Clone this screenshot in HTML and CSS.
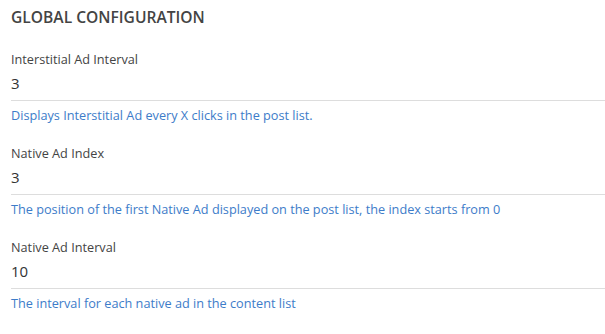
FILE: index.html
```html
<!doctype html>
<html lang="en">
	<head>
		<meta charset="UTF-8" />
		<title>Global Configuration</title>
		<link rel="stylesheet" href="styles.css">
	</head>
	<body>
		<div class="container">
			<h2 class="title">GLOBAL CONFIGURATION</h2>

			<div class="field">
				<label class="field-label">Interstitial Ad Interval</label>
				<div class="field-value">3</div>
				<div class="field-hint">Displays Interstitial Ad every X clicks in the post list.</div>
			</div>

			<div class="field">
				<label class="field-label">Native Ad Index</label>
				<div class="field-value">3</div>
				<div class="field-hint">The position of the first Native Ad displayed on the post list, the index starts from 0</div>
			</div>

			<div class="field">
				<label class="field-label">Native Ad Interval</label>
				<div class="field-value">10</div>
				<div class="field-hint">The interval for each native ad in the content list</div>
			</div>
		</div>
	</body>
</html>
```

FILE: styles.css
```css
body {
	margin: 0;
	font-family: "Open Sans", Arial, sans-serif;
	background-color: white;
	color: #444;
}
.container {
	padding: 5px 0 0 11px;
}
.title {
	margin: 0 0 20px;
	font-size: 15.6px;
	line-height: 24px;
	font-weight: 600;
	color: #444;
}
.field {
	display: flex;
	flex-direction: column;
	margin-bottom: 18px;
}
.field-label {
	font-size: 12.7px;
	line-height: 20px;
	color: #444;
}
.field-value {
	margin-top: 3px;
	padding-bottom: 6px;
	border-bottom: 1px solid #ddd;
	font-size: 15px;
	line-height: 22px;
	color: #333;
}
.field-hint {
	margin-top: 4px;
	font-size: 12.7px;
	line-height: 20px;
	color: #3d7cc9;
}
```
